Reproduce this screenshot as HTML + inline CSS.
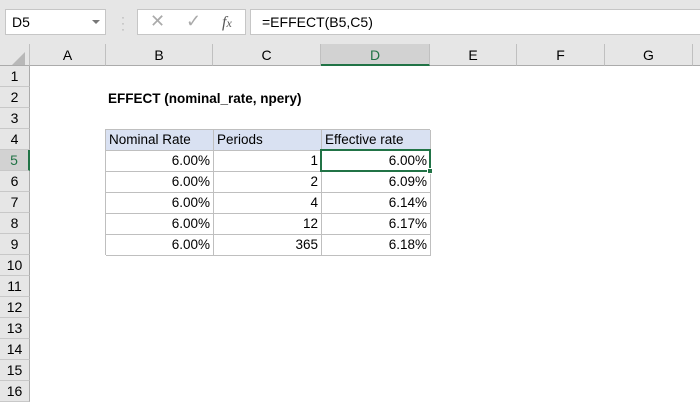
<!DOCTYPE html>
<html><head><style>
*{margin:0;padding:0;box-sizing:border-box}
body{width:700px;height:400px;overflow:hidden;background:#fff;font-family:"Liberation Sans",sans-serif;font-size:13px;color:#000;position:relative}
.a{position:absolute}
.top{left:0;top:0;width:700px;height:44px;background:#e6e6e6}
.box{background:#fff;border:1px solid #c6c6c6}
.ch{top:44px;height:22px;background:#e6e6e6;border-right:1px solid #c0c0c0;border-bottom:1px solid #ababab;text-align:center;line-height:22px;font-size:14px}
.rh{left:0;width:30px;height:21px;background:#e6e6e6;border-bottom:1px solid #c8c8c8;border-right:1px solid #ababab;text-align:center;line-height:21px;font-size:14px}
.c{height:21px;line-height:20px;border-right:1px solid #bfbfbf;border-bottom:1px solid #bfbfbf;padding:0 3px;font-size:13.5px}
.r{text-align:right}
</style></head><body>
<div class="a top"></div>
<div class="a box" style="left:5px;top:9px;width:101px;height:26px;line-height:24px;padding-left:6px;font-size:14px">D5</div>
<div class="a" style="left:92px;top:20px;width:0;height:0;border-left:4px solid transparent;border-right:4px solid transparent;border-top:4px solid #777"></div>
<div class="a" style="left:121px;top:14px;color:#aaa;font-size:12px;line-height:6px">·<br>·<br>·</div>
<div class="a box" style="left:137px;top:9px;width:109px;height:26px"></div>
<div class="a" style="left:150px;top:11px;color:#aaa;font-size:18px">✕</div>
<div class="a" style="left:186px;top:11px;color:#aaa;font-size:18px">✓</div>
<div class="a" style="left:222px;top:14px;color:#555;font-size:16px;font-style:italic;font-family:'Liberation Serif',serif">f<span style="font-size:12px">x</span></div>
<div class="a box" style="left:250px;top:9px;width:460px;height:26px;line-height:24px;padding-left:11px;font-size:14px">=EFFECT(B5,C5)</div>
<div class="a ch" style="left:0;width:30px"></div>
<div class="a" style="left:12px;top:52px;width:0;height:0;border-left:13px solid transparent;border-bottom:13px solid #b8b8b8"></div>
<div class="a ch" style="left:30px;width:76px">A</div>
<div class="a ch" style="left:106px;width:107px">B</div>
<div class="a ch" style="left:213px;width:108px">C</div>
<div class="a ch" style="left:321px;width:109px;background:#d2d2d2;color:#217346;border-bottom:2px solid #217346">D</div>
<div class="a ch" style="left:430px;width:87px">E</div>
<div class="a ch" style="left:517px;width:88px">F</div>
<div class="a ch" style="left:605px;width:88px">G</div>
<div class="a ch" style="left:693px;width:10px"></div>
<div class="a rh" style="top:66px">1</div>
<div class="a rh" style="top:87px">2</div>
<div class="a rh" style="top:108px">3</div>
<div class="a rh" style="top:129px">4</div>
<div class="a rh" style="top:150px;background:#d2d2d2;color:#217346;border-right:2px solid #217346">5</div>
<div class="a rh" style="top:171px">6</div>
<div class="a rh" style="top:192px">7</div>
<div class="a rh" style="top:213px">8</div>
<div class="a rh" style="top:234px">9</div>
<div class="a rh" style="top:255px">10</div>
<div class="a rh" style="top:276px">11</div>
<div class="a rh" style="top:297px">12</div>
<div class="a rh" style="top:318px">13</div>
<div class="a rh" style="top:339px">14</div>
<div class="a rh" style="top:360px">15</div>
<div class="a rh" style="top:381px">16</div>
<div class="a" style="left:108px;top:88px;line-height:21px;font-weight:bold;font-size:13.5px">EFFECT (nominal_rate, npery)</div>
<div class="a" style="left:105px;top:129px;width:325px;height:126px;border-left:1px solid #bfbfbf;border-top:1px solid #bfbfbf;display:grid;grid-template-columns:108px 108px 109px;grid-auto-rows:21px">
<div class="c" style="background:#d9e1f2">Nominal Rate</div><div class="c" style="background:#d9e1f2">Periods</div><div class="c" style="background:#d9e1f2">Effective rate</div>
<div class="c r">6.00%</div><div class="c r">1</div><div class="c r">6.00%</div>
<div class="c r">6.00%</div><div class="c r">2</div><div class="c r">6.09%</div>
<div class="c r">6.00%</div><div class="c r">4</div><div class="c r">6.14%</div>
<div class="c r">6.00%</div><div class="c r">12</div><div class="c r">6.17%</div>
<div class="c r">6.00%</div><div class="c r">365</div><div class="c r">6.18%</div>
</div>
<div class="a" style="left:320px;top:149px;width:111px;height:23px;border:2px solid #217346"></div>
<div class="a" style="left:427px;top:168px;width:6px;height:6px;background:#217346;border:1px solid #fff"></div>
</body></html>
